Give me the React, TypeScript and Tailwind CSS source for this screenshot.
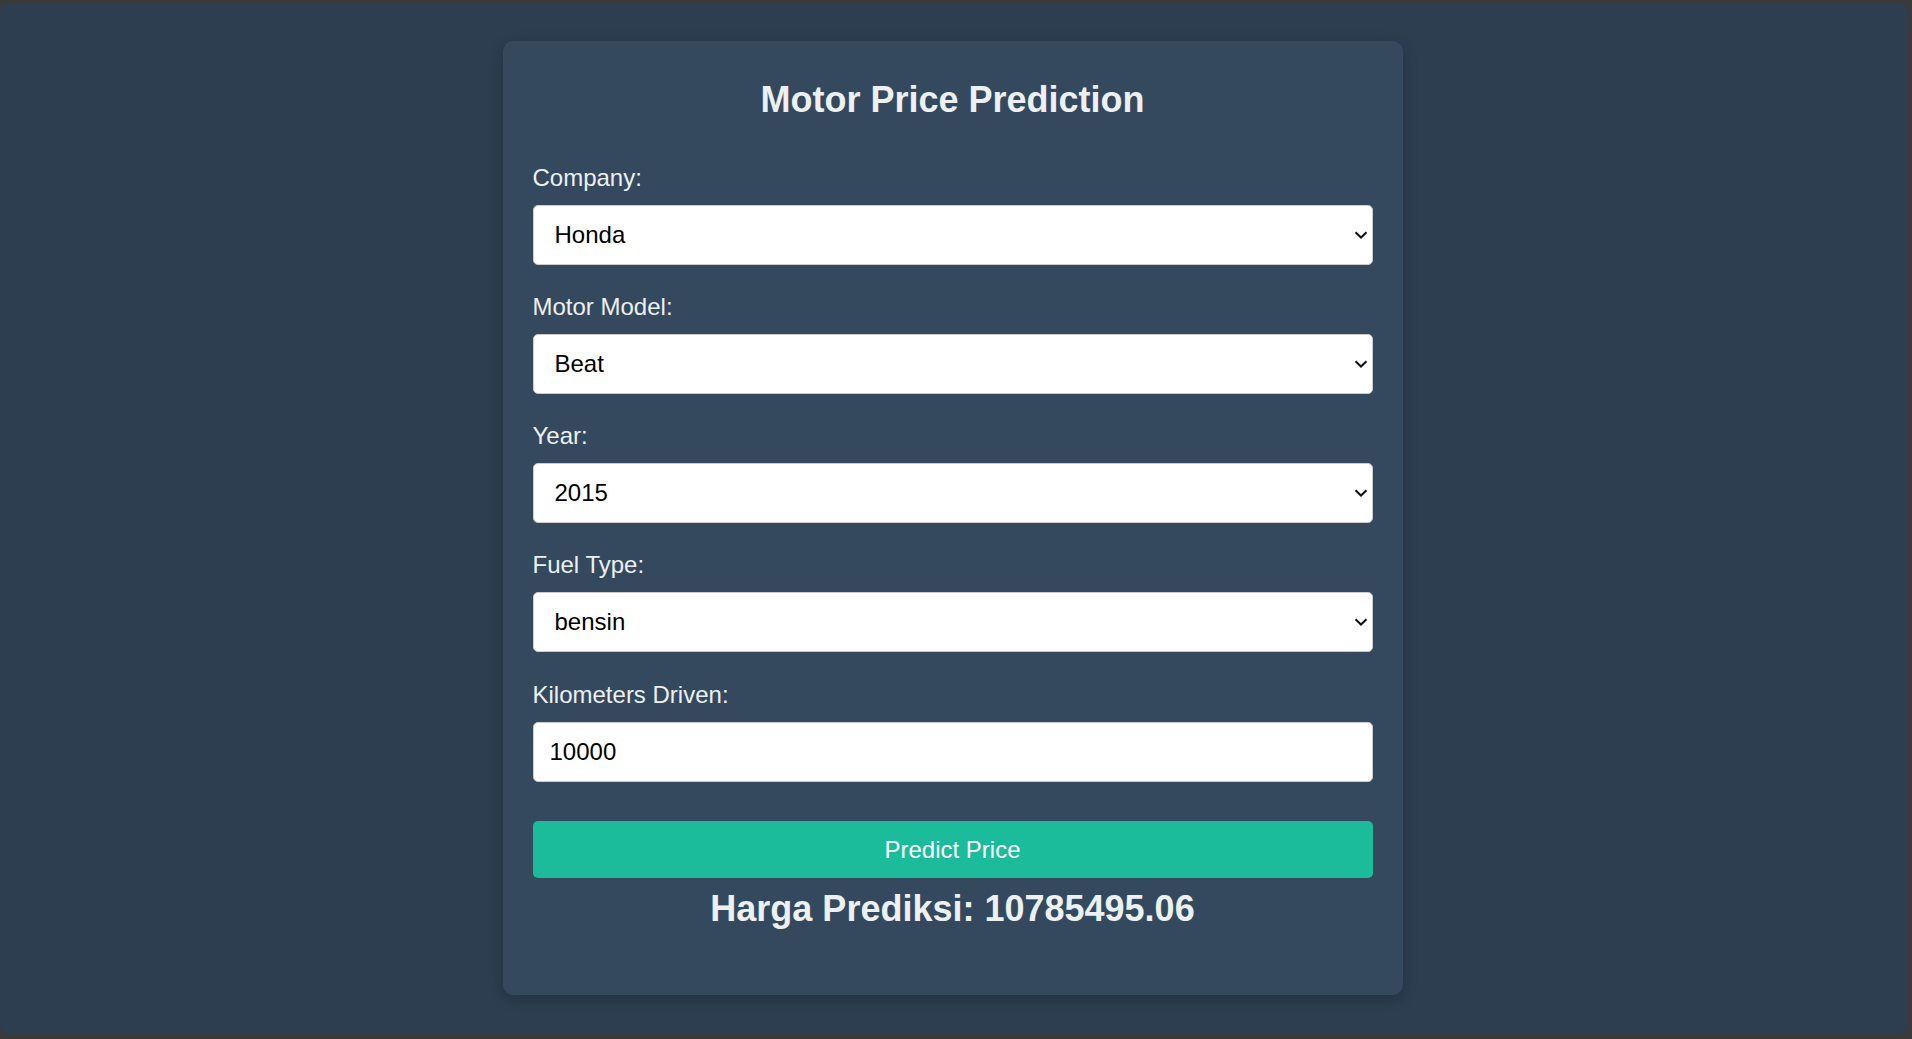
import React from 'react';

const fields = [
  { id: 'company', label: 'Company:', value: 'Honda', options: ['Honda', 'Yamaha', 'Suzuki', 'Kawasaki'] },
  { id: 'model', label: 'Motor Model:', value: 'Beat', options: ['Beat', 'Vario', 'Scoopy', 'PCX'] },
  { id: 'year', label: 'Year:', value: '2015', options: ['2013', '2014', '2015', '2016', '2017'] },
  { id: 'fuel', label: 'Fuel Type:', value: 'bensin', options: ['bensin', 'listrik'] },
];

const Chevron = () => (
  <svg
    className="pointer-events-none absolute right-[5px] top-1/2 -translate-y-1/2"
    width="14"
    height="8"
    viewBox="0 0 14 8"
    fill="none"
  >
    <path d="M1.5 1.2 L7 6.5 L12.5 1.2" stroke="#111" strokeWidth="2" />
  </svg>
);

export default function App() {
  return (
    <div className="flex h-screen w-full bg-[#3a3a3a] pt-[3px] pr-[5px] pb-[5px] font-['Liberation_Sans',Arial,sans-serif]">
      <div className="flex flex-1 justify-center rounded-[8px] bg-[#2c3e50] pt-[38px] pr-[2px]">
        <div className="flex h-[954px] w-[900px] flex-col rounded-[10px] bg-[#34495e] px-[30px] pt-[38px] shadow-[0_4px_15px_rgba(0,0,0,0.2)]">
          <h1 className="text-center text-[36px] font-bold leading-[41px] text-[#ecf0f1]">
            Motor Price Prediction
          </h1>

          <form className="mt-[44px] flex flex-col" onSubmit={(e) => e.preventDefault()}>
            {fields.map((f) => (
              <div key={f.id} className="mb-[28px] flex flex-col">
                <label htmlFor={f.id} className="mb-[13px] text-[24px] leading-[28px] text-[#ecf0f1]">
                  {f.label}
                </label>
                <div className="relative">
                  <select
                    id={f.id}
                    defaultValue={f.value}
                    className="h-[60px] w-full appearance-none rounded-[5px] border border-[#ccc] bg-white pl-[21px] text-[24px] text-black outline-none"
                  >
                    {f.options.map((o) => (
                      <option key={o} value={o}>
                        {o}
                      </option>
                    ))}
                  </select>
                  <Chevron />
                </div>
              </div>
            ))}

            <div className="mt-[1px] flex flex-col">
              <label htmlFor="km" className="mb-[13px] text-[24px] leading-[28px] text-[#ecf0f1]">
                Kilometers Driven:
              </label>
              <input
                id="km"
                type="number"
                defaultValue={10000}
                className="h-[60px] w-full rounded-[5px] border border-[#ccc] bg-white pl-[16px] text-[24px] text-black outline-none"
              />
            </div>

            <button
              type="submit"
              className="mt-[39px] h-[57px] w-full rounded-[5px] bg-[#1abc9c] text-[24px] text-white"
            >
              Predict Price
            </button>
          </form>

          <h2 className="mt-[10px] text-center text-[36px] font-bold leading-[41px] text-[#ecf0f1]">
            Harga Prediksi: 10785495.06
          </h2>
        </div>
      </div>
    </div>
  );
}
